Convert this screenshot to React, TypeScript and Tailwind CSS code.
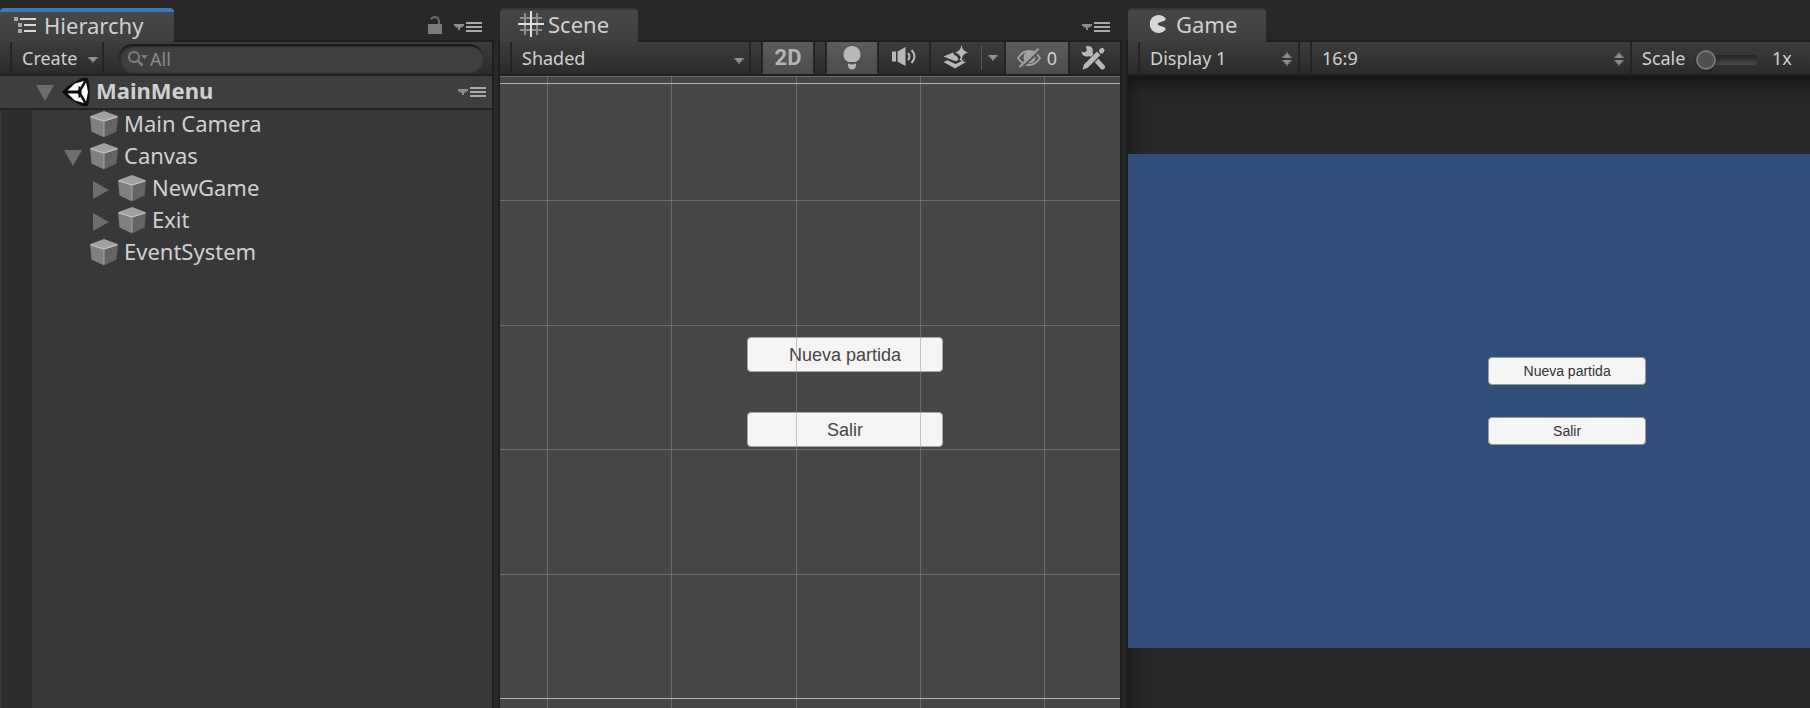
import type { ReactNode } from 'react';

const bar = 'bg-linear-to-b from-[#3c3c3c] to-[#2b2b2b]';
const lit = 'bg-linear-to-b from-[#5c5c5c] to-[#4c4c4c]';
const edge = 'border-[#242424]';

function Caret({ className = '' }: { className?: string }) {
  return (
    <svg className={className} width="10" height="6" viewBox="0 0 10 6" fill="#959595" aria-hidden="true">
      <path d="M0 0h10v2H8v2H6v2H4V4H2V2H0z" fillOpacity=".55" />
      <path d="M1 0h8L5 5z" />
    </svg>
  );
}

function UpDown({ className = '' }: { className?: string }) {
  return (
    <svg className={className} width="10" height="14" viewBox="0 0 10 14" fill="#8f8f8f" aria-hidden="true">
      <path d="M4 0h2v2h2v2h2v2H0V4h2V2h2zM0 8h10v2H8v2H6v2H4v-2H2v-2H0z" fillOpacity=".45" />
      <path d="M5 1l4 5H1zM1 8h8l-4 5z" />
    </svg>
  );
}

function PanelMenu({ label }: { label: string }) {
  return (
    <button type="button" aria-label={label} className="flex shrink-0">
      <svg width="28" height="10" viewBox="0 0 28 10" aria-hidden="true">
        <path d="M0 2h10v2H8.500v1.500H6V8H4V5.500H1.500V4H0z" fill="#8e8e8e" />
        <path d="M12 0h16v2H12zM12 4h16v2H12zM12 8h16v2H12z" fill="#ababab" />
      </svg>
    </button>
  );
}

function Cube() {
  return (
    <svg width="28" height="27" viewBox="0 0 28 27" className="shrink-0" aria-hidden="true">
      <path d="M0 5.500L14 10v16.500L1.500 20.500z" fill="#808080" />
      <path d="M28 5.500L14 10v16.500l12.500-6z" fill="#646464" />
      <path d="M14 0l14 5.300L14 10 0 5.300z" fill="#a0a0a0" />
      <path d="M.5 5.600L14 10l13.500-4.400" fill="none" stroke="#c4c4c4" strokeWidth="1.200" />
      <path d="M14 10v15" stroke="#a4a4a4" strokeWidth="1" />
    </svg>
  );
}

function Fold({ open, label }: { open: boolean; label: string }) {
  return (
    <button type="button" aria-label={label} aria-expanded={open} className="flex w-[18px] shrink-0 justify-center pt-[2px]">
      {open ? (
        <svg width="18" height="16" viewBox="0 0 18 16" fill="#6e6e6e" aria-hidden="true">
          <path d="M0 0h18L9 16z" />
        </svg>
      ) : (
        <svg width="16" height="18" viewBox="0 0 16 18" fill="#6e6e6e" aria-hidden="true">
          <path d="M0 0l16 9-16 9z" />
        </svg>
      )}
    </button>
  );
}

function UnityMark() {
  return (
    <svg width="28" height="30" viewBox="0 0 28 30" className="shrink-0" aria-hidden="true">
      <path d="M0 15L6 9 20 1l6 0 1.500 8v12L26 29l-6 0L6 21z" fill="#0c0c0c" />
      <path d="M5.500 13.500L13 6.500l9-2.500-4.500 7.800-2 1.700z" fill="#fff" />
      <path d="M5.500 16.500L13 23.500l9 2.500-4.500-7.800-2-1.700z" fill="#fff" />
      <path d="M24 5.500l2 9.500-2 9.500-4.500-8v-3z" fill="#fff" />
      <path d="M16.500 8.500l2.500 2.700-2.500 2zM16.500 21.500l2.500-2.700-2.500-2z" fill="#0c0c0c" />
    </svg>
  );
}

function Panel({
  title, icon, tabClass, active, tools, toolbar, children,
}: {
  title: string; icon: ReactNode; tabClass: string; active?: boolean;
  tools?: ReactNode; toolbar: ReactNode; children: ReactNode;
}) {
  return (
    <section aria-label={title} className="flex min-w-0 flex-col pt-2">
      <div className="flex h-[34px] items-stretch justify-between">
        <h2
          className={`relative z-10 flex items-center rounded-t-sm bg-linear-to-b from-[#474747] to-[#3f3f3f] pb-1 text-[22px] leading-7 ${tabClass} ${
            active ? 'border-t-4 border-[#3d7ab8]' : 'border-t-2 border-[#383838]'
          }`}
        >
          {icon}
          {title}
        </h2>
        <div className="flex items-center pt-1">{tools}</div>
      </div>
      <div className="flex min-h-0 flex-1 flex-col shadow-[0_0_0_2px_#1f1f1f]">
        <div className={`flex h-[34px] shrink-0 border-b-2 border-[#202020] text-[18px] ${bar}`}>{toolbar}</div>
        {children}
      </div>
    </section>
  );
}

const tree = [
  { name: 'Main Camera', indent: 'pl-[72px]', fold: null },
  { name: 'Canvas', indent: 'pl-[64px]', fold: true },
  { name: 'NewGame', indent: 'pl-[92px]', fold: false },
  { name: 'Exit', indent: 'pl-[92px]', fold: false },
  { name: 'EventSystem', indent: 'pl-[72px]', fold: null },
];

function Hierarchy() {
  return (
    <Panel
      title="Hierarchy"
      active
      tabClass="w-[174px] gap-2 pl-3"
      icon={
        <svg width="24" height="18" viewBox="0 0 24 18" fill="#d8d8d8" aria-hidden="true">
          <path d="M2 1h4v4H2z" fill="#aaa" />
          <path d="M8 2h16v2H8zM12 8h12v2H12zM12 14h12v2H12z" />
          <path d="M6 7h4v4H6zM6 13h4v4H6z" fill="#aaa" />
        </svg>
      }
      tools={
        <div className="flex items-center gap-3 pr-[10px]">
          <button type="button" aria-label="Lock panel" className="flex pb-1">
            <svg width="14" height="18" viewBox="0 0 14 18" aria-hidden="true">
              <path d="M0 8h14v10H0z" fill="#7b7b7b" />
              <path d="M11 8V4.500Q10 1 7 1T3 3.500" fill="none" stroke="#6b6b6b" strokeWidth="2" />
            </svg>
          </button>
          <PanelMenu label="Hierarchy menu" />
        </div>
      }
      toolbar={
        <>
          <button type="button" className={`ml-[10px] flex w-[94px] items-center justify-between border-x-2 pr-1 pl-[10px] ${edge}`}>
            Create
            <Caret className="mt-1" />
          </button>
          <label className="my-[2px] mr-[9px] ml-[15px] flex min-w-0 flex-1 items-center gap-[2px] rounded-full border-t-2 border-[#191919] bg-[#404040] pl-[9px] shadow-[inset_2px_1px_2px_#2a2a2a,0_1px_1px_#3c3c3c]">
            <svg width="20" height="16" viewBox="0 0 20 16" className="shrink-0" aria-hidden="true">
              <circle cx="6" cy="6" r="5" fill="none" stroke="#7d7d7d" strokeWidth="2" />
              <path d="M9.500 9.500l5 5" stroke="#7d7d7d" strokeWidth="2.500" />
              <path d="M13 4h7l-3.500 4z" fill="#7d7d7d" />
            </svg>
            <input aria-label="Search hierarchy" placeholder="All" className="w-full min-w-0 bg-transparent outline-none placeholder:text-[#8c8c8c]" />
          </label>
        </>
      }
    >
      <div className="flex h-[34px] shrink-0 items-center border-b-2 border-[#222] bg-[#3e3e3e] pr-[6px] pl-9 text-[22px] font-bold">
        <Fold open label="Toggle MainMenu" />
        <div className="flex flex-1 items-center gap-[6px] pl-2">
          <UnityMark />
          <span className="pb-[3px]">MainMenu</span>
        </div>
        <PanelMenu label="Scene options" />
      </div>
      <div className="flex flex-1 bg-[#383838]">
        <div className="w-8 shrink-0 border-l border-[#3a3a3a] bg-[#2e2e2e]" />
        <ul className="-ml-8 flex-1 text-[22px]">
          {tree.map((n) => (
            <li key={n.name} className={`flex h-8 items-center pb-[3px] ${n.indent}`}>
              {n.fold !== null && <Fold open={n.fold} label={`Toggle ${n.name}`} />}
              <span className={`flex items-center gap-[6px] ${n.fold === null ? 'pl-[18px]' : 'pl-2'}`}>
                <Cube />
                <span className="pb-[3px]">{n.name}</span>
              </span>
            </li>
          ))}
        </ul>
      </div>
    </Panel>
  );
}

const columns = [47, 171, 296, 420, 544];
const rows = [124, 249, 373, 498];

function Scene() {
  return (
    <Panel
      title="Scene"
      tabClass="w-[138px] gap-1 pl-[18px]"
      icon={
        <svg width="26" height="26" viewBox="0 0 26 26" aria-hidden="true">
          <path d="M7 2v22M19 2v22M2 7h22M2 19h22" stroke="#8e8e8e" strokeWidth="2" />
          <path d="M13 0v26M0 13h26" stroke="#e0e0e0" strokeWidth="2" />
        </svg>
      }
      tools={<div className="pr-[10px]"><PanelMenu label="Scene menu" /></div>}
      toolbar={
        <>
          <div className={`relative ml-[10px] flex min-w-0 flex-1 border-x-2 ${edge}`}>
            <select aria-label="Draw mode" className="w-full appearance-none bg-transparent pl-[10px] outline-none">
              <option>Shaded</option>
            </select>
            <Caret className="pointer-events-none absolute top-[16px] right-[5px]" />
          </div>
          <button type="button" aria-pressed="true" className={`ml-[10px] w-[54px] border-x-2 font-[Roboto] text-[22px] leading-8 font-bold text-[#b4b4b4] ${edge} ${lit}`}>2D</button>
          <button type="button" aria-label="Scene lighting" aria-pressed="true" className={`ml-[10px] flex w-[52px] items-center justify-center border-l-2 ${edge} ${lit}`}>
            <svg width="18" height="24" viewBox="0 0 18 24" fill="#b8b8b8" aria-hidden="true">
              <path d="M9 0a8.500 8.500 0 0 1 5 15.300Q13 16 12 16H6Q5 16 4 15.300A8.500 8.500 0 0 1 9 0z" />
              <path d="M5 17.500q4 2 8 0v2q-.5 4-4 4t-4-4z" />
            </svg>
          </button>
          <button type="button" aria-label="Scene audio" className={`flex w-[54px] items-center justify-center border-x-2 pb-[2px] ${edge}`}>
            <svg width="26" height="20" viewBox="0 0 26 20" aria-hidden="true">
              <path d="M1 4.500h4v10H1zM6.500 4.500L14.500 0v19l-8-4.500z" fill="#b8b8b8" />
              <path d="M17 6q3 3.500 0 7M20.500 3q6 6.500 0 13" fill="none" stroke="#b8b8b8" strokeWidth="2" />
            </svg>
          </button>
          <button type="button" aria-label="Scene effects" className="flex w-[50px] items-center justify-center pb-[2px]">
            <svg width="26" height="24" viewBox="0 0 26 24" fill="#b8b8b8" aria-hidden="true">
              <path d="M.5 11.500L10 7.500q.5 2.500 3 3.200 2 .8 2.500 4.300l-3 1.200z" />
              <path d="M.5 17l4-1.800 8 3.800 6.500-3 4 1-11 6.500z" />
              <path d="M18.500 0q.8 6 6.500 7.500-5.700 1.300-6.500 7.500-.8-6-6.500-7.500Q17.700 6 18.500 0z" />
              <path d="M16.500 15l1-2.500 2 2.500 2.500-1-3 2z" />
            </svg>
          </button>
          <button type="button" aria-label="Effects options" className={`flex w-[25px] items-center border-r-2 ${edge}`}>
            <span className="h-6 w-px bg-[#555]" />
            <Caret className="ml-[6px]" />
          </button>
          <button type="button" aria-label="Hidden objects" className={`flex w-[64px] items-center justify-center gap-[6px] border-r-2 ${edge} ${lit}`}>
            <svg width="24" height="20" viewBox="0 0 24 20" aria-hidden="true">
              <path d="M1 10q4.500-7 11-7t11 7q-4.500 7-11 7T1 10z" fill="none" stroke="#a2a2a2" strokeWidth="1.800" />
              <circle cx="12.500" cy="9.500" r="6" fill="#a2a2a2" />
              <path d="M4.300 20.300L23.800 1.800" stroke="#555" strokeWidth="2" />
              <path d="M2.500 19L21.500 .8" stroke="#a2a2a2" strokeWidth="2" />
            </svg>
            0
          </button>
          <button type="button" aria-label="Component tools" className="flex w-[50px] items-center justify-center pr-1">
            <svg width="26" height="26" viewBox="0 0 26 26" aria-hidden="true">
              <path d="M6 1.500q-.5 0 1 3.500L5 7.500 1.500 6.500Q2 11 6 11.500q2 .2 3.500-.5l4 4 3-3-4-4Q14 2.500 9.500 1.300 7.500.8 6 1.500z" fill="#b8b8b8" />
              <path d="M17 16l5.500 6" stroke="#b8b8b8" strokeWidth="5" strokeLinecap="round" />
              <path d="M2 25l1.500-6L20.500 2.500l5 4.500L8.500 23z" fill="#2f2f2f" />
              <path d="M2.500 24.500l1.500-5L17 6.500l3.500 3.500L7.500 23z" fill="#b8b8b8" />
              <path d="M21.500 6l.5-.5" stroke="#b8b8b8" strokeWidth="5" strokeLinecap="round" />
            </svg>
          </button>
        </>
      }
    >
      <div className="relative flex-1 overflow-hidden bg-[#474747]">
        <div className="absolute top-[261px] left-[247px] flex w-[196px] flex-col gap-10 font-['Liberation_Sans',sans-serif] text-[18px] text-[#464646]">
          {['Nueva partida', 'Salir'].map((t) => (
            <button key={t} type="button" className="h-[35px] w-full rounded border border-[#a8a8a8] bg-[#f5f5f5] leading-8">{t}</button>
          ))}
        </div>
        <svg className="pointer-events-none absolute inset-0 h-full w-full" aria-hidden="true">
          <g fill="#8f8f8f" fillOpacity=".5">
            {columns.map((x) => <rect key={x} x={x} y="0" width="1" height="100%" />)}
            {rows.map((y) => <rect key={y} x="0" y={y} width="100%" height="1" />)}
            <rect width="100%" height="1" />
          </g>
          <rect y="7" width="100%" height="1" fill="#b0b0b0" />
          <rect y="622" width="100%" height="1" fill="#b0b0b0" />
        </svg>
      </div>
    </Panel>
  );
}

function Game() {
  return (
    <Panel
      title="Game"
      tabClass="w-[138px] gap-2 pl-[22px]"
      icon={
        <svg width="18" height="18" viewBox="0 0 18 18" aria-hidden="true">
          <path d="M15.800 3.500A9 9 0 1 0 15.800 14.500L15 12.500 8 10V8L15 5.500z" fill="#d8d8d8" />
        </svg>
      }
      toolbar={
        <>
          <div className={`relative ml-[10px] flex w-[162px] border-x-2 ${edge}`}>
            <select aria-label="Display" className="w-full appearance-none bg-transparent pl-[10px] outline-none">
              <option>Display 1</option>
            </select>
            <UpDown className="pointer-events-none absolute top-[10px] right-[6px]" />
          </div>
          <div className={`relative ml-[10px] flex min-w-0 flex-1 border-x-2 ${edge}`}>
            <select aria-label="Aspect ratio" className="w-full appearance-none bg-transparent pl-[10px] outline-none">
              <option>16:9</option>
            </select>
            <UpDown className="pointer-events-none absolute top-[10px] right-[6px]" />
          </div>
          <label className="flex w-[178px] items-center pl-[10px]">
            <span className="w-[54px]">Scale</span>
            <input
              type="range"
              min="1"
              max="5"
              defaultValue="1"
              className="mt-1 h-5 w-[62px] appearance-none bg-transparent [&::-webkit-slider-runnable-track]:h-[10px] [&::-webkit-slider-runnable-track]:rounded-full [&::-webkit-slider-runnable-track]:bg-linear-to-b [&::-webkit-slider-runnable-track]:from-[#232323] [&::-webkit-slider-runnable-track]:to-[#484848] [&::-webkit-slider-thumb]:-mt-[5px] [&::-webkit-slider-thumb]:size-5 [&::-webkit-slider-thumb]:appearance-none [&::-webkit-slider-thumb]:rounded-full [&::-webkit-slider-thumb]:border-2 [&::-webkit-slider-thumb]:border-[#777] [&::-webkit-slider-thumb]:bg-[#505050] [&::-webkit-slider-thumb]:shadow-[0_1px_2px_#1c1c1c]"
            />
            <span className="pl-[14px]">1x</span>
          </label>
        </>
      }
    >
      <div className="flex flex-1 flex-col justify-center overflow-hidden bg-[#282828] pt-[18px] shadow-[inset_10px_16px_14px_-8px_#161616]">
        <div className="flex aspect-video h-[494px] flex-col items-center gap-8 self-start bg-[#314d79] pt-[203px] font-['Liberation_Sans',sans-serif] text-[14px] text-[#333]">
          {['Nueva partida', 'Salir'].map((t) => (
            <button key={t} type="button" className="h-7 w-[158px] shrink-0 rounded border border-[#9a9a9a] bg-[#f5f5f5]">{t}</button>
          ))}
        </div>
      </div>
    </Panel>
  );
}

export default function App() {
  return (
    <main className="grid min-h-screen grid-cols-[minmax(0,492fr)_minmax(0,620fr)_minmax(0,682fr)] gap-2 overflow-hidden bg-[#282828] font-['Noto_Sans',sans-serif] text-[#d0d0d0]">
      <Hierarchy />
      <Scene />
      <Game />
    </main>
  );
}
